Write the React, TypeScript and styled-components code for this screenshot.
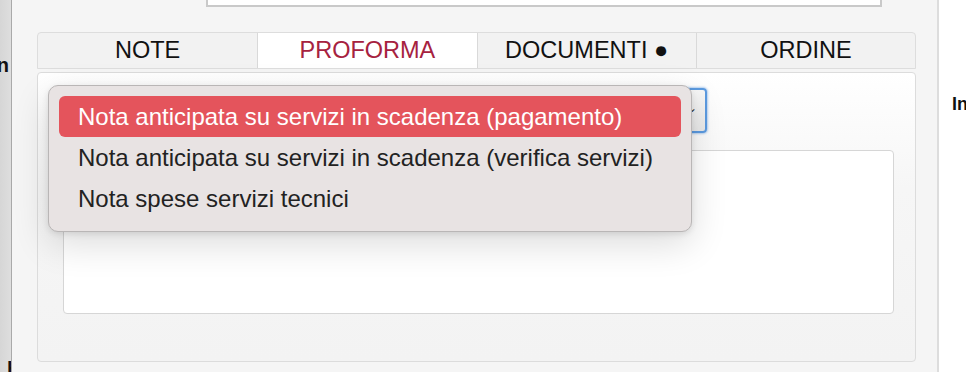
import React, { useState } from 'react';
import styled, { createGlobalStyle } from 'styled-components';

const GlobalStyle = createGlobalStyle`
    html, body {
        margin: 0;
        padding: 0;
        background: #ffffff;
        overflow: hidden;
    }
    body {
        font-family: 'Liberation Sans', Arial, Helvetica, sans-serif;
    }
`;

const TABS = ['NOTE', 'PROFORMA', 'DOCUMENTI ●', 'ORDINE'];

const OPTIONS = [
    'Nota anticipata su servizi in scadenza (pagamento)',
    'Nota anticipata su servizi in scadenza (verifica servizi)',
    'Nota spese servizi tecnici',
];

const Page = styled.div`
    display: flex;
    height: 372px;
    overflow: hidden;
`;

const LeftStrip = styled.div`
    width: 12px;
    flex: none;
    background: linear-gradient(to right, #d6d6d6, #dedede);
    border-right: 1px solid #a9a9a9;
    overflow: hidden;
    display: flex;
    flex-direction: column;
    justify-content: space-between;
    padding: 54px 0 0;
    box-sizing: border-box;
`;

const ClippedLabel = styled.span<{ $align: 'left' | 'right' }>`
    display: block;
    font-weight: 700;
    font-size: 20px;
    line-height: 22px;
    color: #111;
    white-space: nowrap;
    text-align: ${(p) => p.$align};
    direction: ${(p) => (p.$align === 'right' ? 'rtl' : 'ltr')};
    padding-left: ${(p) => (p.$align === 'left' ? '7px' : '0')};
    margin-right: ${(p) => (p.$align === 'right' ? '2px' : '0')};
    margin-bottom: ${(p) => (p.$align === 'left' ? '-8px' : '0')};
`;

const Main = styled.div`
    width: 925px;
    flex: none;
    background: #f5f5f5;
    padding: 0 21px 0 25px;
    box-sizing: border-box;
`;

const TopInput = styled.div`
    margin-left: 169px;
    width: 676px;
    height: 7px;
    background: #fff;
    border: 2px solid #c9c9c9;
    border-top: none;
    box-sizing: border-box;
`;

const TabBar = styled.div`
    margin-top: 25px;
    display: grid;
    grid-template-columns: repeat(4, 1fr);
    height: 37px;
    border: 1px solid #dddddd;
    border-radius: 4px 4px 0 0;
    background: #f2f2f2;
    box-sizing: border-box;
    overflow: hidden;
`;

const Tab = styled.div<{ $active?: boolean }>`
    display: flex;
    align-items: center;
    justify-content: center;
    font-size: 23.5px;
    color: ${(p) => (p.$active ? '#a6223f' : '#111')};
    background: ${(p) => (p.$active ? '#ffffff' : 'transparent')};
    border-left: 1px solid #d9d9d9;
    &:first-child {
        border-left: none;
    }
`;

const PanelBody = styled.div`
    margin-top: 3px;
    height: 290px;
    border: 1px solid #dcdcdc;
    border-radius: 4px;
    background: linear-gradient(to bottom, #ffffff 0%, #f6f6f6 40%, #f3f3f3 100%);
    padding: 15px 21px 0 25px;
    box-sizing: border-box;
`;

const SelectWrap = styled.div`
    position: relative;
    width: 644px;
`;

const SelectBox = styled.div`
    height: 45px;
    border: 2px solid #5b9ae0;
    border-radius: 4px;
    background: linear-gradient(to bottom, #f7f7f7, #e9e9e9);
    box-shadow: 0 0 2px 1px rgba(91, 154, 224, 0.45);
    box-sizing: border-box;
    display: flex;
    align-items: center;
    justify-content: flex-end;
    padding: 0 8px 6px 0;
    color: #333;
    font-size: 12px;
`;

const Menu = styled.ul`
    position: absolute;
    left: -15px;
    top: -3px;
    width: 644px;
    margin: 0;
    padding: 10px 10px 12px;
    list-style: none;
    background: #e8e3e3;
    border: 1px solid #b9b6b6;
    border-radius: 10px;
    box-shadow: 0 12px 36px rgba(0, 0, 0, 0.14), 0 2px 6px rgba(0, 0, 0, 0.1);
    box-sizing: border-box;
    z-index: 2;
`;

const MenuItem = styled.li<{ $selected?: boolean }>`
    height: 41px;
    display: flex;
    align-items: center;
    padding-left: 19px;
    border-radius: 6px;
    font-size: 24px;
    white-space: nowrap;
    color: ${(p) => (p.$selected ? '#ffffff' : '#222222')};
    background: ${(p) => (p.$selected ? '#e4545c' : 'transparent')};
`;

const TextArea = styled.div`
    margin-top: 17px;
    height: 162px;
    background: #ffffff;
    border: 1px solid #d6d6d6;
    border-radius: 4px;
`;

const RightSide = styled.div`
    flex: 1;
    background: #ffffff;
    border-left: 2px solid #dddddd;
    padding: 94px 0 0 13px;
    overflow: hidden;
`;

const SideLabel = styled.span`
    font-weight: 700;
    font-size: 18px;
    color: #111;
    white-space: nowrap;
`;

export default function App() {
    const [activeTab] = useState(1);
    const [selected] = useState(0);

    return (
        <>
            <GlobalStyle />
            <Page>
                <LeftStrip>
                    <ClippedLabel $align="right">n</ClippedLabel>
                    <ClippedLabel $align="left">h</ClippedLabel>
                </LeftStrip>
                <Main>
                    <TopInput />
                    <TabBar>
                        {TABS.map((t, i) => (
                            <Tab key={t} $active={i === activeTab}>
                                {t}
                            </Tab>
                        ))}
                    </TabBar>
                    <PanelBody>
                        <SelectWrap>
                            <SelectBox>⌄</SelectBox>
                            <Menu>
                                {OPTIONS.map((o, i) => (
                                    <MenuItem key={o} $selected={i === selected}>
                                        {o}
                                    </MenuItem>
                                ))}
                            </Menu>
                        </SelectWrap>
                        <TextArea />
                    </PanelBody>
                </Main>
                <RightSide>
                    <SideLabel>Intestazione</SideLabel>
                </RightSide>
            </Page>
        </>
    );
}
